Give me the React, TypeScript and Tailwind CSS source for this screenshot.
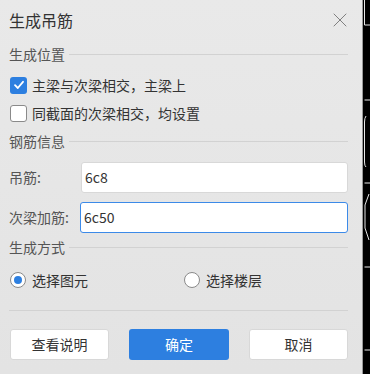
import { X } from 'lucide-react';

function SectionTitle({ label }: { label: string }) {
  return (
    <div className="flex items-center h-[20px] mt-[4px]">
      <span className="text-[14px] text-[#555] leading-none">{label}</span>
      <div className="flex-1 h-px bg-[#d2d2d2] ml-[4px] mr-[14px]" />
    </div>
  );
}

function Checkbox({ checked, label }: { checked: boolean; label: string }) {
  return (
    <div className="flex items-center h-[28px] pl-[1px]">
      {checked ? (
        <div className="w-[17px] h-[17px] rounded-[3px] bg-[#2d7fe0] flex items-center justify-center">
          <svg width="12" height="12" viewBox="0 0 12 12">
            <path d="M2 6.2 L4.8 9 L10 2.8" stroke="white" strokeWidth="1.8" fill="none" strokeLinecap="round" strokeLinejoin="round" />
          </svg>
        </div>
      ) : (
        <div className="w-[17px] h-[17px] rounded-[3px] bg-white border border-[#8a8a8a]" />
      )}
      <span className="ml-[5px] text-[14px] text-[#333]">{label}</span>
    </div>
  );
}

function Radio({ checked, label }: { checked: boolean; label: string }) {
  return (
    <div className="flex items-center">
      <div className="w-[16px] h-[16px] rounded-full bg-white border border-[#8a8a8a] flex items-center justify-center">
        {checked && <div className="w-[8px] h-[8px] rounded-full bg-[#2d7fe0]" />}
      </div>
      <span className="ml-[6px] text-[14px] text-[#333]">{label}</span>
    </div>
  );
}

export default function App() {
  return (
    <div
      className="flex w-[370px] h-[374px] bg-black"
      style={{ fontFamily: '"Microsoft YaHei", "Noto Sans CJK SC", "Noto Sans", sans-serif' }}
    >
      <div className="w-[363px] h-full bg-gradient-to-b from-[#e9e9e9] via-[#e6e6e6] to-[#e3e3e3] border-r border-[#9a9a9a] flex flex-col pl-[9px]">
        <div className="flex items-center justify-between h-[40px] pr-[10px]">
          <span className="text-[16px] text-[#333]">生成吊筋</span>
          <X size={24} strokeWidth={1} className="text-[#808080]" />
        </div>
        <SectionTitle label="生成位置" />
        <div className="mt-[7px]">
          <Checkbox checked label="主梁与次梁相交，主梁上" />
          <Checkbox checked={false} label="同截面的次梁相交，均设置" />
        </div>
        <SectionTitle label="钢筋信息" />
        <div className="flex items-center mt-[11px] pr-[14px]">
          <span className="w-[72px] text-[14px] text-[#555]">吊筋:</span>
          <div className="flex-1 h-[31px] bg-white border border-[#d8d8d8] rounded-[3px] flex items-center px-[3px] text-[14px] text-[#333]">
            6c8
          </div>
        </div>
        <div className="flex items-center mt-[9px] pr-[14px]">
          <span className="w-[71px] text-[14px] text-[#555]">次梁加筋:</span>
          <div className="flex-1 h-[31px] bg-white border border-[#3c8ae8] rounded-[3px] flex items-center px-[3px] text-[14px] text-[#333]">
            6c50
          </div>
        </div>
        <SectionTitle label="生成方式" />
        <div className="flex items-center h-[28px] mt-[9px] pl-[1px]">
          <div className="w-[174px]">
            <Radio checked label="选择图元" />
          </div>
          <Radio checked={false} label="选择楼层" />
        </div>
        <div className="h-px bg-[#d2d2d2] mt-[16px] mr-[14px]" />
        <div className="flex items-center mt-[18px] pl-[1px] pr-[14px] justify-between">
          <button className="w-[99px] h-[31px] bg-white border border-[#d8d8d8] rounded-[3px] text-[14px] text-[#333]">
            查看说明
          </button>
          <button className="w-[100px] h-[31px] bg-[#2d7fe0] rounded-[3px] text-[14px] text-white">
            确定
          </button>
          <button className="w-[99px] h-[31px] bg-white border border-[#d8d8d8] rounded-[3px] text-[14px] text-[#333]">
            取消
          </button>
        </div>
      </div>
      <svg width="7" height="374" viewBox="0 0 7 374" className="block">
        <g stroke="#e8e8e8" strokeWidth="1" fill="none">
          <path d="M1.5 0 V25 H7" />
          <path d="M1.5 100 H7" />
          <path d="M3 116 Q1.5 118 1.5 122 V162 Q1.5 166 3 167" />
          <path d="M1.5 183 H7" />
          <path d="M6 194 L2 205 V228 L6 240" />
          <path d="M1.5 267 H7" />
          <path d="M1.5 350 H7" />
        </g>
      </svg>
    </div>
  );
}
